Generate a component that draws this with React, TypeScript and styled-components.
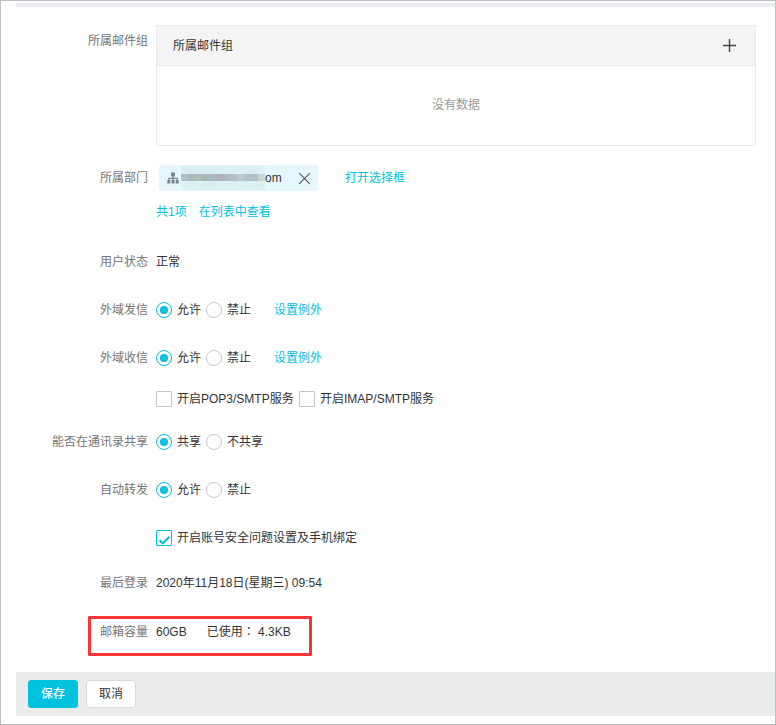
import React from "react";
import styled, { createGlobalStyle, css } from "styled-components";

const GlobalStyle = createGlobalStyle`
  * { box-sizing: border-box; }
  body { margin: 0; background: #fff; }
`;

const Frame = styled.div`
  width: 776px;
  height: 725px;
  border: 1px solid #c0c0c0;
  padding: 2px 0 0 15px;
  display: flex;
  flex-direction: column;
  overflow: hidden;
  background: #fff;
  color: #333;
  font: 12px/18px "Liberation Sans", "Noto Sans CJK SC", sans-serif;
  white-space: nowrap;
`;
const TopRule = styled.div`
  height: 4px;
  flex: none;
  background: #e9edf2;
`;
const Form = styled.main`
  display: flex;
  flex-direction: column;
  padding-top: 18px;
`;
const Row = styled.div<{ $h: number; $gap?: number; $top?: boolean }>`
  display: grid;
  grid-template-columns: 132px 600px;
  column-gap: 8px;
  align-items: ${(p) => (p.$top ? "start" : "center")};
  height: ${(p) => p.$h}px;
  margin-top: ${(p) => p.$gap ?? 0}px;
  position: relative;
`;
const Label = styled.div<{ $down?: number }>`
  text-align: right;
  color: #757575;
  padding-top: ${(p) => p.$down ?? 0}px;
`;
const Content = styled.div`
  display: flex;
  align-items: center;
`;
const Panel = styled.section`
  height: 121px;
  border: 1px solid #e9eaea;
`;
const PanelHead = styled.header`
  height: 40px;
  display: flex;
  align-items: center;
  justify-content: space-between;
  padding: 0 19px 0 16px;
  background: #f4f4f4;
  border-bottom: 1px solid #e9eaea;
`;
const PanelEmpty = styled.div`
  height: 78px;
  display: flex;
  align-items: center;
  justify-content: center;
  color: #999;
`;
const Chip = styled.div`
  width: 159px;
  height: 26px;
  margin-left: 3px;
  display: flex;
  align-items: center;
  background: #e5f7fc;
  border-radius: 3px;
  padding-left: 8px;
`;
const Mosaic = styled.svg`
  margin-left: 2px;
  flex: none;
`;
const CloseIcon = styled.svg`
  margin-left: auto;
  margin-right: 7px;
`;
const Link = styled.a<{ $ml?: number }>`
  color: #00c1de;
  margin-left: ${(p) => p.$ml ?? 0}px;
`;
const Option = styled.label<{ $w?: number }>`
  display: flex;
  align-items: center;
  gap: 5px;
  width: ${(p) => (p.$w ? p.$w + "px" : "auto")};
`;
const Radio = styled.span<{ $on?: boolean }>`
  width: 16px;
  height: 16px;
  flex: none;
  border-radius: 50%;
  border: 1px solid ${(p) => (p.$on ? "#00c1de" : "#c4c6cf")};
  display: flex;
  align-items: center;
  justify-content: center;
  ${(p) =>
    p.$on &&
    css`
      &::after {
        content: "";
        width: 8px;
        height: 8px;
        border-radius: 50%;
        background: #00c1de;
      }
    `}
`;
const Box = styled.span<{ $on?: boolean }>`
  width: 16px;
  height: 16px;
  flex: none;
  border-radius: 1px;
  border: 1px solid ${(p) => (p.$on ? "#00c1de" : "#c3c3c3")};
  display: flex;
`;
const Used = styled.span`
  margin-left: 20px;
`;
const Colon = styled.span`
  font-family: "Noto Sans CJK TC", sans-serif;
  line-height: 1;
`;
const Highlight = styled.div`
  position: absolute;
  left: 72px;
  top: 14px;
  width: 224px;
  height: 40px;
  border: 3px solid #f93535;
  border-radius: 1px;
`;
const Footer = styled.footer`
  margin-top: 10px;
  height: 44px;
  flex: none;
  display: flex;
  align-items: center;
  gap: 8px;
  padding-left: 12px;
  background: #eaecec;
`;
const Button = styled.button<{ $primary?: boolean }>`
  width: 50px;
  height: 28px;
  padding: 0;
  font: inherit;
  font-weight: ${(p) => (p.$primary ? 500 : 400)};
  border-radius: 3px;
  border: 1px solid ${(p) => (p.$primary ? "#00c1de" : "#d9dbdb")};
  background: ${(p) => (p.$primary ? "#00c1de" : "#fff")};
  color: ${(p) => (p.$primary ? "#fff" : "#333")};
`;

const mosaicCells: [string, string, string][] = [
  ["#d8edf0", "#b2c0c0", "#dcf1f4"],
  ["#d8edf0", "#a9b9b8", "#dbf0f3"],
  ["#d8edef", "#aebcbc", "#dbf0f3"],
  ["#d9eef0", "#a8b7b5", "#daeff2"],
  ["#d9eef1", "#acbab9", "#daeff2"],
  ["#dbf0f3", "#b4b2b8", "#dbf0f3"],
  ["#dbf0f3", "#aebbbc", "#dbf0f3"],
  ["#dbeff3", "#b7bdc5", "#daeff2"],
  ["#dcf1f4", "#bccccd", "#dcf1f4"],
  ["#d9eef1", "#b2c3c1", "#dcf1f4"],
  ["#daeef2", "#b1c0c5", "#dbf0f3"],
  ["#ddf2f5", "#c6d5d4", "#daeef0"],
];

function RadioRow({ label, h, on, off, link }: { label: string; h: number; on: string; off: string; link?: string }) {
  return (
    <Row $h={h}>
      <Label>{label}</Label>
      <Content>
        <Option $w={50}><Radio $on />{on}</Option>
        <Option><Radio />{off}</Option>
        {link && <Link $ml={23}>{link}</Link>}
      </Content>
    </Row>
  );
}

export default function App() {
  return (
    <>
      <GlobalStyle />
      <Frame>
        <TopRule />
        <Form>
          <Row $h={121} $top>
            <Label $down={7}>所属邮件组</Label>
            <Panel>
              <PanelHead>
                所属邮件组
                <svg width="13" height="13" viewBox="0 0 13 13">
                  <path d="M0 6.5H13M6.5 0V13" stroke="#444" strokeWidth="1.4" />
                </svg>
              </PanelHead>
              <PanelEmpty>没有数据</PanelEmpty>
            </Panel>
          </Row>
          <Row $h={40} $gap={12}>
            <Label>所属部门</Label>
            <Content>
              <Chip>
                <svg width="12" height="12" viewBox="0 0 12 12">
                  <path d="M4 0.5h4v4H4zM0.3 8h3v3.5h-3zM4.5 8h3v3.5h-3zM8.7 8h3v3.5h-3z" fill="#808487" />
                  <path d="M6 4v4M1.8 8V6.3h8.4V8" fill="none" stroke="#808487" strokeWidth="1.2" />
                </svg>
                <Mosaic width="84" height="24" viewBox="0 0 84 24" shapeRendering="crispEdges">
                  {mosaicCells.map(([a, b, c], i) => (
                    <g key={i}>
                      <rect x={i * 7} width="7" height="8" fill={a} />
                      <rect x={i * 7} y="8" width="7" height="7" fill={b} />
                      <rect x={i * 7} y="15" width="7" height="9" fill={c} />
                    </g>
                  ))}
                </Mosaic>
                om
                <CloseIcon width="13" height="13" viewBox="0 0 13 13">
                  <path d="M1.2 1.2L11.8 11.8M11.8 1.2L1.2 11.8" stroke="#555" strokeWidth="1.1" />
                </CloseIcon>
              </Chip>
              <Link $ml={27}>打开选择框</Link>
            </Content>
          </Row>
          <Row $h={28}>
            <Label />
            <Content>
              <Link>共1项</Link>
              <Link $ml={12}>在列表中查看</Link>
            </Content>
          </Row>
          <Row $h={48} $gap={12}>
            <Label>用户状态</Label>
            <Content>正常</Content>
          </Row>
          <RadioRow label="外域发信" h={48} on="允许" off="禁止" link="设置例外" />
          <RadioRow label="外域收信" h={48} on="允许" off="禁止" link="设置例外" />
          <Row $h={34}>
            <Label />
            <Content>
              <Option $w={143}><Box />开启POP3/SMTP服务</Option>
              <Option><Box />开启IMAP/SMTP服务</Option>
            </Content>
          </Row>
          <RadioRow label="能否在通讯录共享" h={52} on="共享" off="不共享" />
          <RadioRow label="自动转发" h={44} on="允许" off="禁止" />
          <Row $h={52}>
            <Label />
            <Content>
              <Option>
                <Box $on>
                  <svg width="14" height="14" viewBox="0 0 14 14">
                    <path d="M2.5 9.2L5.8 12.3L12.5 5.7" fill="none" stroke="#00c1de" strokeWidth="2" />
                  </svg>
                </Box>
                开启账号安全问题设置及手机绑定
              </Option>
            </Content>
          </Row>
          <Row $h={38}>
            <Label>最后登录</Label>
            <Content>2020年11月18日(星期三) 09:54</Content>
          </Row>
          <Row $h={60}>
            <Label>邮箱容量</Label>
            <Content>60GB<Used>已使用<Colon>：</Colon> 4.3KB</Used></Content>
            <Highlight />
          </Row>
        </Form>
        <Footer>
          <Button $primary>保存</Button>
          <Button>取消</Button>
        </Footer>
      </Frame>
    </>
  );
}
